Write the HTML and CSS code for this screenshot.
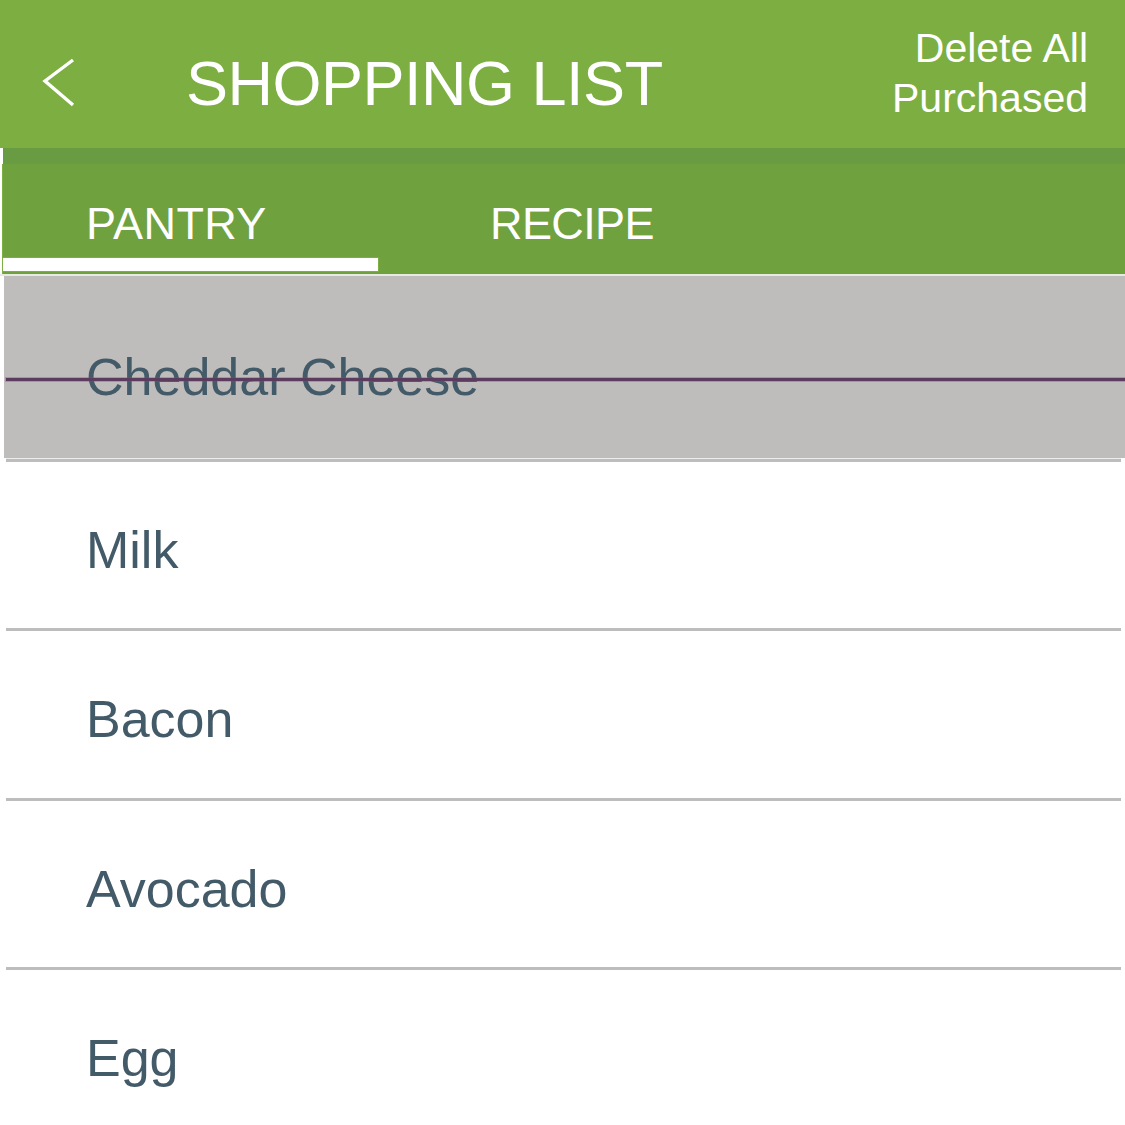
FILE: index.html
```html
<!DOCTYPE html>
<html lang="en">
<head>
<meta charset="utf-8">
<title>Shopping List</title>
<link rel="stylesheet" href="styles.css">
</head>
<body>
<div class="app">
  <header class="topbar">
    <svg class="back" viewBox="0 0 40 52" width="40" height="52" aria-label="Back">
      <polyline points="33,3 5,24 33,48" fill="none" stroke="#ffffff" stroke-width="3.4" stroke-linecap="butt" stroke-linejoin="miter"/>
    </svg>
    <h1 class="title">SHOPPING LIST</h1>
    <div class="spacer"></div>
    <div class="action">Delete All<br>Purchased</div>
  </header>
  <div class="band"></div>
  <nav class="tabs">
    <div class="tab tab-active">
      <span class="tab-label tab-label-first">PANTRY</span>
      <span class="indicator"></span>
    </div>
    <div class="tab">
      <span class="tab-label tab-label-second">RECIPE</span>
    </div>
  </nav>
  <div class="tabs-edge"></div>
  <ul class="list">
    <li class="item item-done"><span class="item-text">Cheddar Cheese</span></li>
    <li class="sep sep-first"></li>
    <li class="item"><span class="item-text">Milk</span></li>
    <li class="sep"></li>
    <li class="item"><span class="item-text">Bacon</span></li>
    <li class="sep"></li>
    <li class="item"><span class="item-text">Avocado</span></li>
    <li class="sep"></li>
    <li class="item"><span class="item-text">Egg</span></li>
  </ul>
</div>
</body>
</html>
```
FILE: styles.css
```css
html, body {
  margin: 0;
  padding: 0;
  background: #ffffff;
}
body {
  font-family: "Liberation Sans", Arial, Helvetica, sans-serif;
  width: 1125px;
  height: 1125px;
  overflow: hidden;
}
.app {
  width: 1125px;
}
.topbar {
  height: 148px;
  background: #7cae41;
  display: flex;
  align-items: flex-start;
  color: #ffffff;
}
.back {
  display: block;
  margin-left: 40px;
  margin-top: 57px;
  flex: none;
}
.title {
  margin: 52px 0 0 106px;
  font-size: 63px;
  line-height: 63px;
  font-weight: 400;
  letter-spacing: -0.5px;
  white-space: nowrap;
}
.spacer {
  flex: 1;
}
.action {
  margin-top: 23px;
  margin-right: 37px;
  font-size: 41px;
  line-height: 50px;
  text-align: right;
  white-space: nowrap;
}
.band {
  height: 16px;
  margin-left: 3px;
  background: #699b42;
}
.tabs {
  height: 110px;
  margin-left: 2px;
  background: #6fa13f;
  display: flex;
  box-sizing: border-box;
  border-left: 1px solid #7cae41;
}
.tab {
  width: 375px;
  display: flex;
  flex-direction: column;
  padding-top: 37px;
  box-sizing: border-box;
}
.tab-label {
  color: #ffffff;
  font-size: 45px;
  line-height: 45px;
  white-space: nowrap;
}
.tab-label-first {
  padding-left: 83px;
  letter-spacing: 0.4px;
}
.tab-label-second {
  padding-left: 112px;
  letter-spacing: -0.6px;
}
.indicator {
  display: block;
  margin-top: 11px;
  height: 13px;
  width: 375px;
  box-sizing: content-box;
  background: #ffffff;
  border: 1px solid #7cae41;
  margin-left: -1px;
}
.tabs-edge {
  height: 2px;
  background: #e6eae0;
}
.list {
  list-style: none;
  margin: 0;
  padding: 0;
}
.item {
  height: 166.4px;
  box-sizing: border-box;
  padding-top: 62px;
  padding-left: 86px;
  position: relative;
}
.item-text {
  display: block;
  font-size: 52px;
  line-height: 52px;
  color: #435a68;
  white-space: nowrap;
}
.item-done {
  height: 182px;
  margin-left: 4px;
  padding-top: 75px;
  padding-left: 82px;
  background: #bfbdbb;
}
.item-done::after {
  content: "";
  position: absolute;
  left: 2px;
  right: 0;
  top: 102px;
  height: 3px;
  background: #5b3b5e;
  box-shadow: 0 0 0 1px rgba(110, 90, 115, 0.35);
}
.sep {
  height: 3px;
  margin: 0 4px 0 6px;
  background: #bdbdbd;
}
.sep-first {
  border-top: 1px solid #ececec;
  margin-left: 6px;
}
```
